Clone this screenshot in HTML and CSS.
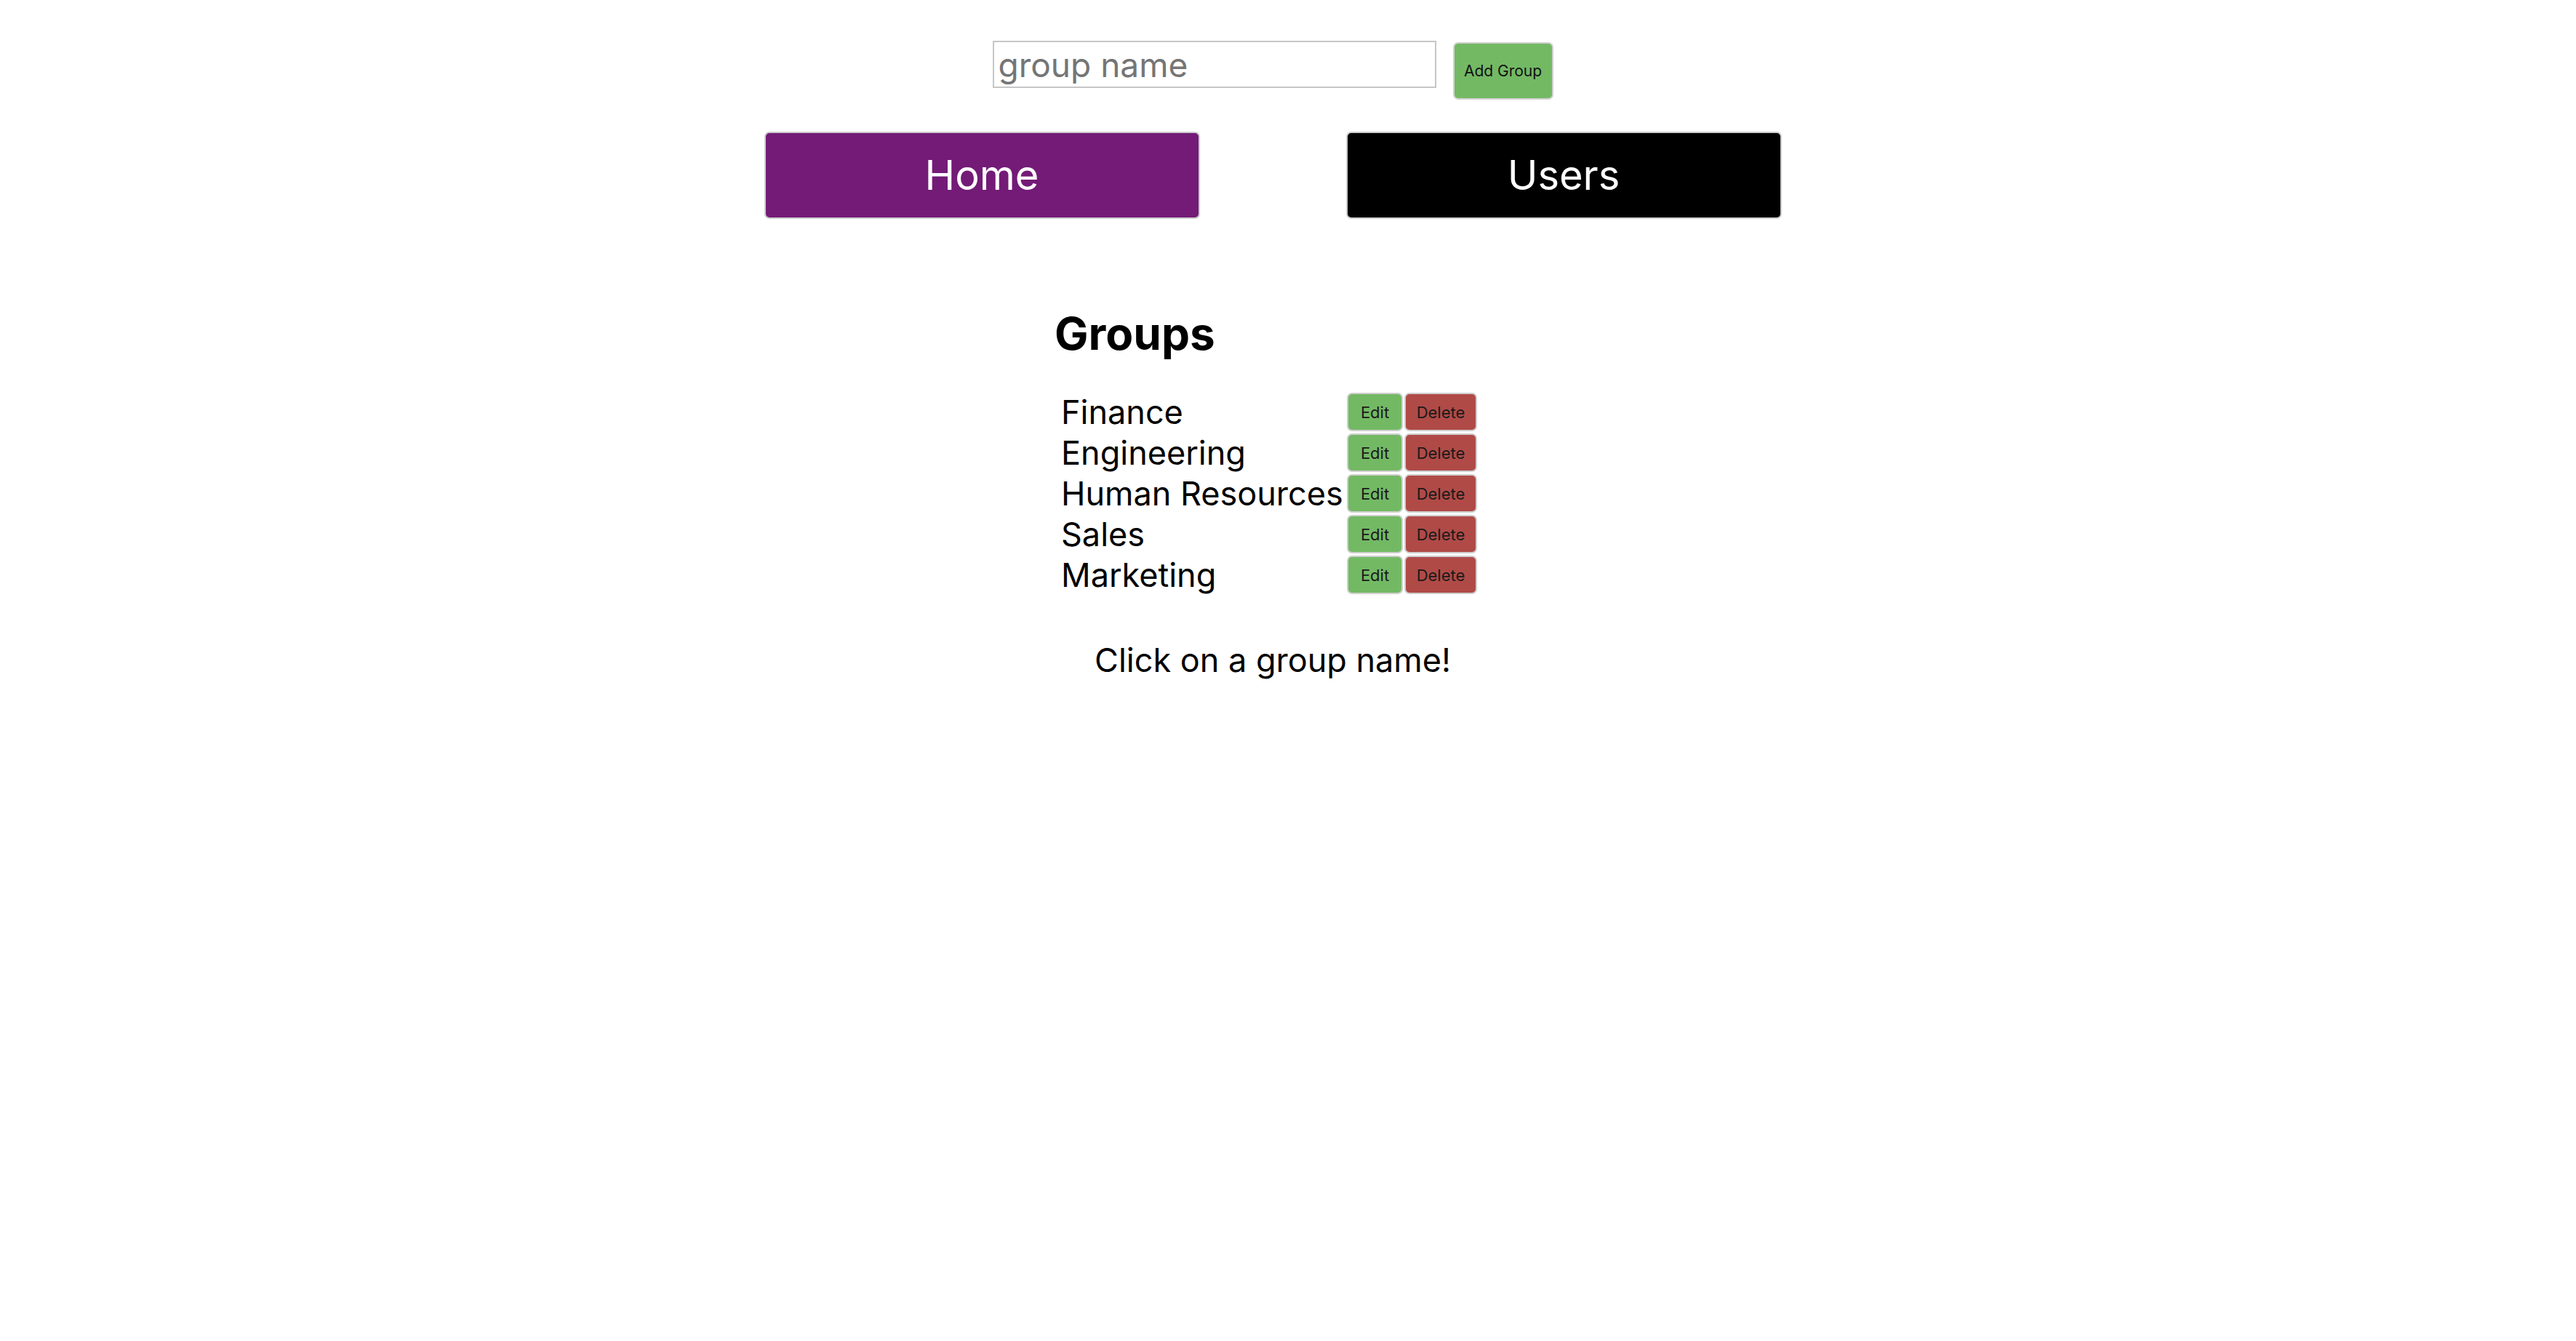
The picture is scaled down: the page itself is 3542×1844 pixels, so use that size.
FILE: index.html
```html
<!DOCTYPE html>
<html lang="en">
<head>
<meta charset="utf-8">
<title>Groups</title>
<link rel="stylesheet" href="styles.css">
</head>
<body>
<div class="app">
  <div class="add-row">
    <input class="group-input" type="text" placeholder="group name">
    <button class="btn-add">Add Group</button>
  </div>
  <nav class="nav">
    <a class="nav-btn nav-home">Home</a>
    <a class="nav-btn nav-users">Users</a>
  </nav>
  <section class="groups">
    <h2 class="groups-title">Groups</h2>
    <div class="group-list">
      <span class="group-name">Finance</span><button class="btn-edit">Edit</button><button class="btn-delete">Delete</button>
      <span class="group-name">Engineering</span><button class="btn-edit">Edit</button><button class="btn-delete">Delete</button>
      <span class="group-name">Human Resources</span><button class="btn-edit">Edit</button><button class="btn-delete">Delete</button>
      <span class="group-name">Sales</span><button class="btn-edit">Edit</button><button class="btn-delete">Delete</button>
      <span class="group-name">Marketing</span><button class="btn-edit">Edit</button><button class="btn-delete">Delete</button>
    </div>
  </section>
  <p class="hint">Click on a group name!</p>
</div>
</body>
</html>
```

FILE: styles.css
```css
html, body {
  margin: 0;
  padding: 0;
  background: #ffffff;
}

body {
  font-family: Inter, "Liberation Sans", sans-serif;
  color: #000;
}

.app {
  width: 3500px;
  padding-top: 56px;
}

.add-row {
  display: flex;
  justify-content: center;
  align-items: flex-start;
  gap: 23px;
}

.group-input {
  box-sizing: border-box;
  width: 610px;
  height: 65px;
  margin: 0;
  padding: 0 6px;
  border: 2px solid #c6c6c6;
  border-radius: 0;
  font-family: Inter, "Liberation Sans", sans-serif;
  font-size: 46px;
  color: #222;
  outline: none;
}

.group-input::placeholder {
  color: #757575;
}

.btn-add {
  box-sizing: border-box;
  width: 138px;
  height: 79px;
  margin-top: 2px;
  padding: 0;
  background: #73b964;
  border: 2px solid #d2d2d2;
  border-radius: 7px;
  font-family: Inter, "Liberation Sans", sans-serif;
  font-size: 21px;
  color: #111;
}

.nav {
  display: flex;
  justify-content: center;
  gap: 201px;
  margin-top: 44px;
}

.nav-btn {
  box-sizing: border-box;
  width: 599px;
  height: 120px;
  display: flex;
  align-items: center;
  justify-content: center;
  border: 2px solid #cdcdcd;
  border-radius: 7px;
  color: #fff;
  font-size: 56px;
  text-decoration: none;
}

.nav-home {
  background: #731b77;
}

.nav-users {
  background: #000;
}

.groups {
  width: 600px;
  margin: 121px auto 0;
}

.groups-title {
  margin: 0;
  font-size: 62px;
  line-height: 74px;
  font-weight: 700;
  letter-spacing: 0;
}

.group-list {
  display: grid;
  grid-template-columns: 391px 77px 100px;
  grid-auto-rows: 53px;
  column-gap: 2px;
  row-gap: 3px;
  align-items: center;
  margin: 44px 0 0 9px;
}

.group-name {
  font-size: 45px;
  line-height: 53px;
  white-space: nowrap;
}

.btn-edit,
.btn-delete {
  box-sizing: border-box;
  height: 53px;
  margin: 0;
  padding: 0;
  border: 2px solid #cfcfcf;
  border-radius: 7px;
  font-family: Inter, "Liberation Sans", sans-serif;
  font-size: 22px;
  color: #1a1a1a;
}

.btn-edit {
  background: #73b964;
}

.btn-delete {
  background: #b04a47;
}

.hint {
  margin: 64px 0 0;
  text-align: center;
  font-size: 45px;
  line-height: 54px;
}
```
